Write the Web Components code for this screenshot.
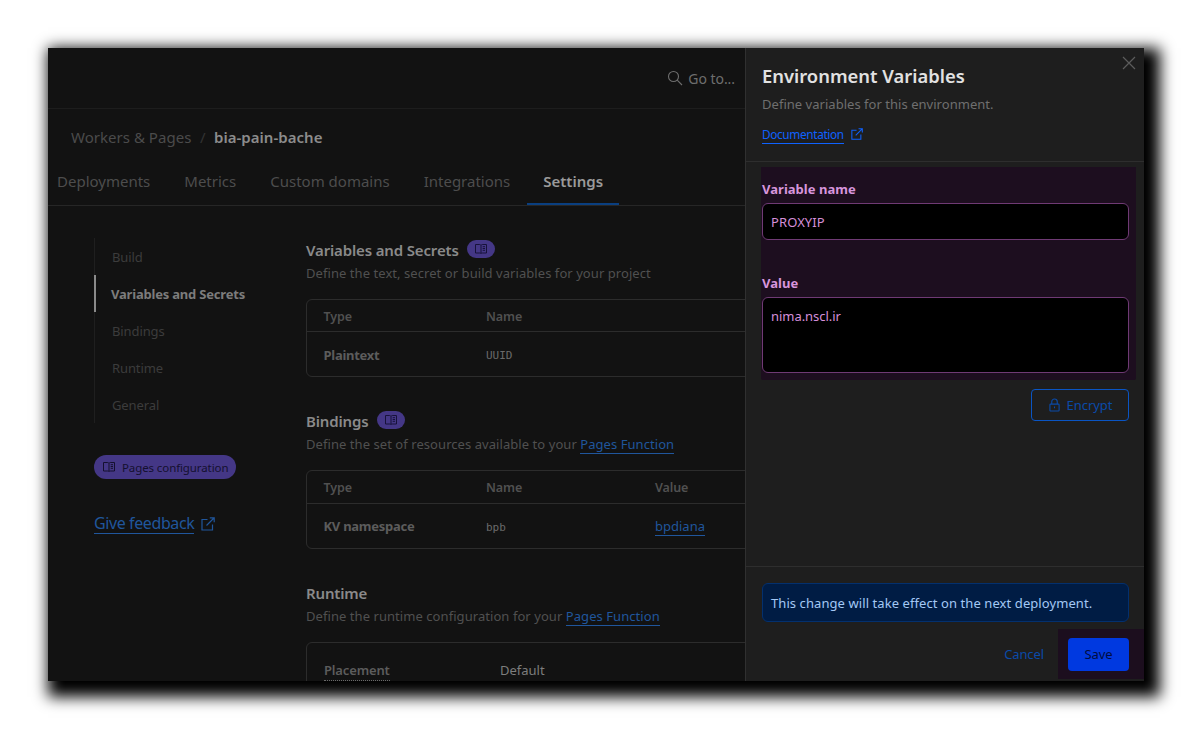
<!DOCTYPE html>
<html>
<head>
<meta charset="utf-8">
<title>Environment Variables</title>
<style>
  html, body { margin: 0; background: #fff; }
  body { padding: 48px 51px 51px 48px; font-family: "Noto Sans", "Open Sans", sans-serif; }
</style>
</head>
<body>
<app-window>
  <page-main slot="main"></page-main>
  <env-drawer slot="drawer"></env-drawer>
</app-window>

<script>
const BOOK = `<svg width="12" height="12" viewBox="0 0 12 12" fill="none" stroke="currentColor" stroke-width="1"><path d="M.5 1.5h4.2c.6 0 1 .3 1.3.8.3-.5.7-.8 1.3-.8h4.200v8.500H7.300c-.6 0-1 .2-1.300.6-.3-.4-.7-.6-1.300-.6H.5z"/><path d="M6 2.300v8.200M7.700 3.700h2.300M7.700 5.500h2.300M7.700 7.300h2.300"/></svg>`;
const EXT = `<svg width="14" height="14" viewBox="0 0 14 14" fill="none" stroke="currentColor" stroke-width="1.200"><path d="M6.500 2.500H1v10.500h10.500V7.500"/><path d="M5.500 8.500L13 1M8.800.8h4.400v4.400"/></svg>`;

class AppWindow extends HTMLElement {
  constructor() {
    super();
    this.attachShadow({ mode: 'open' }).innerHTML = `
      <style>
        :host {
          display: flex;
          width: 1096px;
          height: 633px;
          background: #121212;
          box-shadow: 8px 8px 14px 8px #000;
        }
        .clip { display: flex; width: 100%; height: 100%; overflow: hidden; }
      </style>
      <div class="clip"><slot name="main"></slot><slot name="drawer"></slot></div>`;
  }
}

class TabNav extends HTMLElement {
  constructor() {
    super();
    this.attachShadow({ mode: 'open' }).innerHTML = `
      <style>
        :host { display: flex; height: 40px; padding-left: 9px; border-bottom: 1px solid #262626; font-size: 15px; letter-spacing: 0; color: #4d4d4d; }
        span { padding: 0 17px; line-height: 32px; box-sizing: border-box; height: 40px; white-space: nowrap; }
        span:first-of-type { padding-left: 0; }
        .on { color: #9a9a9a; font-weight: 600; padding: 0 16px; border-bottom: 2px solid #0a3f80; }
      </style>
      <span>Deployments</span><span>Metrics</span><span>Custom domains</span><span>Integrations</span><span class="on">Settings</span>`;
  }
}

class SideNav extends HTMLElement {
  constructor() {
    super();
    this.attachShadow({ mode: 'open' }).innerHTML = `
      <style>
        :host { display: block; width: 212px; flex: none; padding-left: 46px; font-size: 13px; color: #3c3c3c; }
        ul { list-style: none; margin: 0; padding: 0; border-left: 1px solid #1f1f1f; }
        li { height: 37px; line-height: 38px; padding-left: 17px; white-space: nowrap; letter-spacing: -.1px; }
        li.on { color: #7c7c7c; font-weight: 700; box-shadow: inset 2px 0 0 #8a8a8a; margin-left: -1px; padding-left: 17px; letter-spacing: -.2px; }
        .pill { display: inline-flex; align-items: center; gap: 7px; height: 24px; width: 142px; box-sizing: border-box; padding-left: 9px; margin-top: 32px; border-radius: 12px; background: #443786; color: #14102f; font-size: 11.500px; white-space: nowrap; letter-spacing: -.1px; }
        .fb { display: flex; align-items: center; gap: 7px; margin-top: 34px; font-size: 16px; color: #20569c; letter-spacing: -.4px; }
        .fb a { border-bottom: 1px solid #20569c; line-height: 20px; padding-bottom: 0; }
      </style>
      <ul>
        <li>Build</li><li class="on">Variables and Secrets</li><li>Bindings</li><li>Runtime</li><li>General</li>
      </ul>
      <div class="pill">${BOOK}<span>Pages configuration</span></div>
      <div class="fb"><a>Give feedback</a>${EXT}</div>`;
  }
}

class SettingsSection extends HTMLElement {
  constructor() {
    super();
    const title = this.getAttribute('title-text');
    const badge = this.hasAttribute('badge') ? `<i>${BOOK}</i>` : '';
    this.attachShadow({ mode: 'open' }).innerHTML = `
      <style>
        :host { display: block; }
        h2 { display: flex; align-items: center; gap: 8px; margin: 0; height: 21px; padding-top: 1px; font-size: 15px; font-weight: 600; color: #8a8a8a; letter-spacing: -.15px; }
        i { display: flex; align-items: center; justify-content: center; width: 28px; height: 18px; margin-top: -1px; border-radius: 9px; background: #443786; color: #17123a; }
        p { margin: 2px 0 0; height: 22px; line-height: 22px; font-size: 13px; color: #505050; letter-spacing: .06px; white-space: nowrap; }
        .tbl { margin-top: 15px; }
      </style>
      <h2>${title}${badge}</h2>
      <p><slot name="desc"></slot></p>
      <div class="tbl"><slot></slot></div>`;
  }
}

class DataTable extends HTMLElement {
  constructor() {
    super();
    const value = this.getAttribute('value');
    this.attachShadow({ mode: 'open' }).innerHTML = `
      <style>
        :host { display: block; width: 640px; border: 1px solid #2c2c2c; border-radius: 6px; font-size: 13px; color: #505050; }
        .row { display: grid; grid-template-columns: 162.500px 169px 1fr; align-items: center; padding-left: 16.500px; white-space: nowrap; }
        .head { height: 30px; padding-top: 1px; border-bottom: 1px solid #2c2c2c; font-weight: 600; font-size: 12.500px; letter-spacing: -.1px; }
        .body { height: 43px; padding-top: 1px; }
        :host([value]) .head { height: 31px; }
        :host([value]) .body { height: 44px; padding-top: 0; }
        b { font-weight: 700; color: #5c5c5c; letter-spacing: -.27px; }
        code { font-family: "DejaVu Sans Mono", monospace; font-size: 11px; color: #6a6a6a; margin-top: 2px; }
        a { color: #20569c; border-bottom: 1px solid #20569c; justify-self: start; }
      </style>
      <div class="row head">
        <span>Type</span><span>Name</span><span>${value ? 'Value' : ''}</span>
      </div>
      <div class="row body">
        <b>${this.getAttribute('type')}</b><code>${this.getAttribute('name')}</code>${value ? `<a>${value}</a>` : ''}
      </div>`;
  }
}

class PlacementCard extends HTMLElement {
  constructor() {
    super();
    this.attachShadow({ mode: 'open' }).innerHTML = `
      <style>
        :host { display: block; width: 640px; height: 80px; border: 1px solid #2c2c2c; border-radius: 6px; font-size: 13px; }
        .row { display: grid; grid-template-columns: 176px 1fr; padding: 18px 0 0 17px; line-height: 19px; }
        b { justify-self: start; font-weight: 600; color: #5c5c5c; border-bottom: 1px dotted #6a6a6a; letter-spacing: -.15px; }
        span { color: #7d7d7d; }
      </style>
      <div class="row"><b>Placement</b><span>Default</span></div>`;
  }
}

class PageMain extends HTMLElement {
  constructor() {
    super();
    this.attachShadow({ mode: 'open' }).innerHTML = `
      <style>
        :host { display: block; flex: none; width: 697px; height: 633px; overflow: hidden; }
        .top { display: flex; align-items: center; justify-content: flex-end; gap: 5px; height: 61px; padding-right: 10px; box-sizing: border-box; border-bottom: 1px solid #1d1d1d; font-size: 14px; color: #6e6e6e; letter-spacing: -.05px; }
        .crumbs { display: flex; align-items: center; height: 56px; padding-left: 23px; font-size: 15px; color: #4b4b4b; letter-spacing: .03px; white-space: nowrap; }
        .crumbs s { text-decoration: none; margin: 0 8.500px; color: #333; }
        .crumbs b { font-weight: 600; color: #8c8c8c; }
        .content { display: flex; padding-top: 32px; }
        .col { flex: none; width: 650px; }
        settings-section { margin-bottom: 32px; }
        a { color: #20569c; border-bottom: 1px solid #20569c; }
      </style>
      <div class="top">
        <svg width="16" height="16" viewBox="0 0 16 16" fill="none" stroke="#6e6e6e" stroke-width="1.100"><circle cx="6.500" cy="6.500" r="5"/><path d="M10.200 10.200L15 15"/></svg>
        <span>Go to...</span>
      </div>
      <div class="crumbs">Workers &amp; Pages<s>/</s><b>bia-pain-bache</b></div>
      <tab-nav></tab-nav>
      <div class="content">
        <side-nav></side-nav>
        <div class="col">
          <settings-section title-text="Variables and Secrets" badge>
            <span slot="desc">Define the text, secret or build variables for your project</span>
            <data-table type="Plaintext" name="UUID"></data-table>
          </settings-section>
          <settings-section title-text="Bindings" badge>
            <span slot="desc">Define the set of resources available to your <a>Pages Function</a></span>
            <data-table type="KV namespace" name="bpb" value="bpdiana"></data-table>
          </settings-section>
          <settings-section title-text="Runtime">
            <span slot="desc">Define the runtime configuration for your <a>Pages Function</a></span>
            <placement-card></placement-card>
          </settings-section>
        </div>
      </div>`;
  }
}

class EnvDrawer extends HTMLElement {
  constructor() {
    super();
    this.attachShadow({ mode: 'open' }).innerHTML = `
      <style>
        :host { display: flex; flex-direction: column; flex: none; width: 399px; height: 633px; box-sizing: border-box; border-left: 1px solid #303030; background: #1e1e1e; position: relative; color: #6f6f6f; }
        .close { position: absolute; top: 8px; right: 8px; width: 14px; height: 14px; }
        header { height: 114px; box-sizing: border-box; padding: 16px 16px 0; border-bottom: 1px solid #2e2e2e; }
        h1 { margin: 0; height: 24px; line-height: 24px; font-size: 18.400px; font-weight: 600; color: #e2e2e2; }
        header p { margin: 6px 0 0; height: 20px; line-height: 20px; font-size: 13px; color: #6f6f6f; letter-spacing: .03px; }
        .doc { display: flex; align-items: flex-start; gap: 7px; margin-top: 12px; font-size: 11.800px; color: #0f62fe; letter-spacing: -.35px; }
        .doc a { border-bottom: 1px solid #0f62fe; line-height: 17px; height: 17px; }
        .doc svg { width: 12px; height: 12px; margin-top: 2px; }
        .band { margin: 5px 8px 0 15px; height: 213px; box-sizing: border-box; padding: 12px 7px 0 1px; background: #1d0e1f; border-radius: 0 0 2px 2px; }
        label { display: block; height: 20px; line-height: 20px; font-size: 13px; font-weight: 700; color: #d795dc; letter-spacing: .03px; }
        .field { box-sizing: border-box; margin-top: 4px; background: #000; border: 1px solid #6f3a74; border-radius: 6px; padding: 0 8px; font-size: 13px; color: #d58fd9; letter-spacing: .1px; }
        .name { height: 37px; line-height: 36px; margin-bottom: 33px; }
        .value { height: 76px; line-height: 16px; padding-top: 10px; letter-spacing: -.05px; }
        .enc { display: flex; justify-content: flex-end; padding: 9px 15px 0 0; }
        .enc div { display: flex; align-items: center; justify-content: center; gap: 7px; width: 98px; height: 32px; box-sizing: border-box; padding-left: 1px; border: 1px solid #0a55c4; border-radius: 4px; color: #0a4aa8; font-size: 13px; letter-spacing: -.05px; }
        footer { margin-top: auto; border-top: 1px solid #2e2e2e; box-sizing: border-box; height: 115px; padding-top: 16px; }
        .alert { box-sizing: border-box; margin: 0 15px 0 16px; height: 39px; line-height: 38px; padding-left: 8px; background: #001c44; border: 1px solid #03306e; border-radius: 6px; font-size: 13px; color: #a3c8f5; letter-spacing: .08px; white-space: nowrap; }
        .actions { display: flex; justify-content: flex-end; align-items: center; margin-top: 7px; }
        .cancel { color: #0a4aa8; font-size: 13px; margin-right: 14px; letter-spacing: -.1px; }
        .hl { padding: 9px 15px 8px 10px; background: #1c0e1e; }
        .save { width: 61px; height: 33px; line-height: 32px; text-align: center; background: #0039e0; border-radius: 4px; color: #000c40; font-size: 13px; letter-spacing: -.1px; }
      </style>
      <svg class="close" viewBox="0 0 14 14" stroke="#5c5c5c" stroke-width="1.200"><path d="M1 1l12 12M13 1L1 13"/></svg>
      <header>
        <h1>Environment Variables</h1>
        <p>Define variables for this environment.</p>
        <div class="doc"><a>Documentation</a>${EXT}</div>
      </header>
      <div class="band">
        <label>Variable name</label>
        <div class="field name">PROXYIP</div>
        <label>Value</label>
        <div class="field value">nima.nscl.ir</div>
      </div>
      <div class="enc"><div>
        <svg width="11" height="14" viewBox="0 0 12 14" fill="none" stroke="currentColor" stroke-width="1.200"><rect x="1" y="6" width="10" height="7.500" rx=".8"/><path d="M3 6V3.500a3 3 0 0 1 6 0V6M6 8.500v2"/></svg>
        <span>Encrypt</span>
      </div></div>
      <footer>
        <div class="alert">This change will take effect on the next deployment.</div>
        <div class="actions">
          <span class="cancel">Cancel</span>
          <div class="hl"><div class="save">Save</div></div>
        </div>
      </footer>`;
  }
}

customElements.define('app-window', AppWindow);
customElements.define('tab-nav', TabNav);
customElements.define('side-nav', SideNav);
customElements.define('settings-section', SettingsSection);
customElements.define('data-table', DataTable);
customElements.define('placement-card', PlacementCard);
customElements.define('page-main', PageMain);
customElements.define('env-drawer', EnvDrawer);
</script>
</body>
</html>
